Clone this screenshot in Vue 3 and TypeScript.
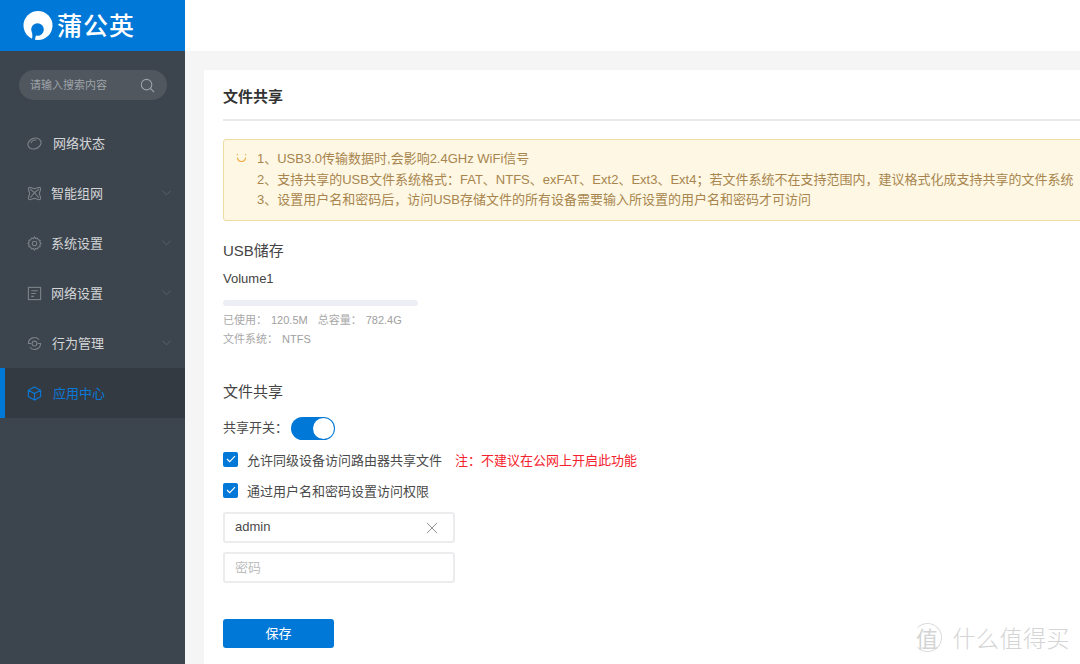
<template>
  <div class="page">
    <aside class="sidebar">
      <div class="logo">
        <svg class="logo-mark" viewBox="0 0 30 30" width="30" height="30">
          <circle cx="15" cy="14.5" r="14.5" fill="#fff" />
          <circle cx="14.5" cy="18.5" r="6.3" fill="#0078d7" />
          <path fill="#0078d7" d="M8.8 21c0.7 2.5 0.9 4.500-0.200 8.500l3 0.500 1.400-6z" />
        </svg>
        <span class="logo-text">蒲公英</span>
      </div>
      <div class="search">
        <span class="search-text">请输入搜索内容</span>
        <svg viewBox="0 0 16 16" width="15" height="15" fill="none" stroke="#9aa1a8" stroke-width="1.2">
          <circle cx="7" cy="7" r="5.6" />
          <path d="M11.2 11.2 15 15" />
        </svg>
      </div>
      <nav class="menu">
        <div v-for="item in menu" :key="item.label" class="menu-item" :class="{ active: item.active }">
          <svg class="menu-icon" viewBox="0 0 16 16" width="15" height="15" fill="none" stroke="currentColor" stroke-width="1.2" v-html="item.icon"></svg>
          <span class="menu-label" :style="{ marginLeft: item.gap + 'px' }">{{ item.label }}</span>
          <svg v-if="item.arrow" class="chevron" viewBox="0 0 10 6" width="9" height="6" fill="none" stroke="#5d656d" stroke-width="1">
            <path d="M0.5 0.5 5 5l4.5-4.5" />
          </svg>
        </div>
      </nav>
    </aside>

    <main class="main">
      <div class="topbar"></div>
      <section class="card">
        <h2 class="card-title">文件共享</h2>
        <div class="alert">
          <svg class="smile" viewBox="0 0 12 10" width="11" height="10" fill="none" stroke="#efb04c" stroke-width="1.3">
            <path d="M1.5 4.5c0.5 2.8 2.3 4.3 4.5 4.3s4-1.500 4.5-4.300" />
            <path d="M1.5 0.5v1.6M10.500 0.5v1.6" />
          </svg>
          <div class="alert-lines">
            <p>1、USB3.0传输数据时,会影响2.4GHz WiFi信号</p>
            <p>2、支持共享的USB文件系统格式：FAT、NTFS、exFAT、Ext2、Ext3、Ext4；若文件系统不在支持范围内，建议格式化成支持共享的文件系统</p>
            <p>3、设置用户名和密码后，访问USB存储文件的所有设备需要输入所设置的用户名和密码才可访问</p>
          </div>
        </div>

        <h3 class="section-title usb-title">USB储存</h3>
        <div class="volume">Volume1</div>
        <div class="bar"><div class="bar-fill" :style="{ width: usedPercent + '%' }"></div></div>
        <div class="meta">
          <div><span>已使用：</span><span class="m-val">120.5M</span><span class="m-gap">总容量：</span><span class="m-val">782.4G</span></div>
          <div><span>文件系统：</span><span class="m-val">NTFS</span></div>
        </div>

        <h3 class="section-title share-title">文件共享</h3>
        <div class="switch-row">
          <span>共享开关：</span>
          <span class="switch"><span class="knob"></span></span>
        </div>
        <label class="check-row first">
          <span class="check"><svg viewBox="0 0 12 10" width="10" height="8" fill="none" stroke="#fff" stroke-width="1.4"><path d="M1 5l3.4 3.4L11 1.4" /></svg></span>
          <span>允许同级设备访问路由器共享文件</span>
          <span class="warn">注：不建议在公网上开启此功能</span>
        </label>
        <label class="check-row second">
          <span class="check"><svg viewBox="0 0 12 10" width="10" height="8" fill="none" stroke="#fff" stroke-width="1.4"><path d="M1 5l3.4 3.4L11 1.4" /></svg></span>
          <span>通过用户名和密码设置访问权限</span>
        </label>
        <div class="field user">
          <span class="field-text">admin</span>
          <svg viewBox="0 0 12 12" width="12" height="12" fill="none" stroke="#8f8f8f" stroke-width="1"><path d="M1 1l10 10M11 1 1 11" /></svg>
        </div>
        <div class="field pass"><span class="field-text placeholder">密码</span></div>
        <button class="save" type="button">保存</button>
      </section>
    </main>

    <div class="watermark">
      <span class="wm-circle">值</span>
      <span class="wm-text">什么值得买</span>
    </div>
  </div>
</template>

<script setup lang="ts">
type MenuItem = {
  label: string
  icon: string
  gap: number
  arrow?: boolean
  active?: boolean
}

const usedPercent = 0.02

const menu: MenuItem[] = [
  {
    label: '网络状态',
    gap: 11,
    icon: '<ellipse cx="8" cy="8" rx="7.2" ry="5.6" transform="rotate(-22 8 8)"/><path d="M4.2 7.6C5 5.3 7.5 4 10 4.3"/>',
  },
  {
    label: '智能组网',
    gap: 9,
    arrow: true,
    icon: '<path d="M3 1.5c2 0 3 1.300 5 1.300s3-1.300 5-1.300c1 0 1.500.5 1.500 1.500 0 2-1.300 3-1.300 5s1.300 3 1.300 5c0 1-.5 1.500-1.500 1.500-2 0-3-1.300-5-1.300s-3 1.300-5 1.300c-1 0-1.500-.5-1.500-1.500 0-2 1.300-3 1.300-5S1.500 5 1.500 3c0-1 .5-1.500 1.500-1.500z"/><path d="M3.5 3.500C6 5 10 9 12.500 12.500M12.500 3.500C10 5 6 9 3.500 12.500"/>',
  },
  {
    label: '系统设置',
    gap: 9,
    arrow: true,
    icon: '<circle cx="8" cy="8" r="2.4"/><path d="M8 1l1.200 1.700 2-.5.800 1.900 2 .6-.3 2.100L15 8l-1.300 1.200.3 2.100-2 .6-.8 1.900-2-.5L8 15l-1.200-1.700-2 .5-.8-1.900-2-.6.3-2.100L1 8l1.300-1.200L2 4.700l2-.6.800-1.900 2 .5z"/>',
  },
  {
    label: '网络设置',
    gap: 9,
    arrow: true,
    icon: '<rect x="1.5" y="1.5" width="13" height="13"/><path d="M4.5 5h7M4.5 8h5M4.5 11h3"/>',
  },
  {
    label: '行为管理',
    gap: 10,
    arrow: true,
    icon: '<circle cx="8" cy="8" r="2.6"/><path d="M1.5 8a6.5 6.5 0 0 1 11.5-4M14.5 8A6.5 6.5 0 0 1 3 12M1 8h3.500M11.500 8H15"/>',
  },
  {
    label: '应用中心',
    gap: 11,
    active: true,
    icon: '<path d="M8 1l6.500 3.500v7L8 15l-6.500-3.500v-7zM1.500 4.500 8 8l6.500-3.500M8 8v7"/>',
  },
]
</script>

<style>
html,
body {
  margin: 0;
  height: 100%;
  overflow: hidden;
}
</style>

<style scoped>
.page {
  position: relative;
  display: flex;
  width: 1080px;
  height: 664px;
  overflow: hidden;
  font-family: "Liberation Sans", "Noto Sans CJK SC", sans-serif;
  font-size: 13px;
  color: #4a4a4a;
  background: #f5f5f5;
}

.sidebar {
  flex: none;
  width: 185px;
  background: #3c444d;
}

.logo {
  display: flex;
  align-items: center;
  height: 51px;
  padding-left: 23px;
  background: #0078d7;
  color: #fff;
}

.logo-text {
  margin: 0 0 3px 4px;
  font-size: 25px;
  font-weight: 500;
  letter-spacing: 1px;
}

.search {
  display: flex;
  align-items: center;
  justify-content: space-between;
  box-sizing: border-box;
  width: 148px;
  height: 30px;
  margin: 19px 0 0 19px;
  padding: 0 12px 0 11px;
  border-radius: 15px;
  background: #50575f;
}

.search-text {
  margin-bottom: 2px;
  font-size: 11px;
  color: #9ea3a8;
}

.menu {
  margin-top: 18px;
}

.menu-item {
  display: flex;
  align-items: center;
  height: 50px;
  padding-left: 27px;
  color: #7b8187;
}

.menu-label {
  margin-bottom: 2px;
  font-size: 13px;
  color: #d4d6d8;
}

.chevron {
  margin-left: auto;
  margin-right: 14px;
}

.menu-item.active {
  background: #343a41;
  color: #0a78d8;
  box-shadow: inset 5px 0 0 #0078d7;
}

.menu-item.active .menu-label {
  color: #0a78d8;
}

.main {
  flex: 1;
  min-width: 0;
}

.topbar {
  height: 51px;
  background: #fff;
}

.card {
  box-sizing: border-box;
  width: 900px;
  height: 620px;
  margin: 19px 0 0 19px;
  padding: 0 0 0 19px;
  background: #fff;
}

.card-title {
  height: 49px;
  margin: 0;
  border-bottom: 2px solid #e9e9ec;
  font-size: 15px;
  font-weight: 700;
  line-height: 54px;
  color: #333;
}

.alert {
  display: flex;
  box-sizing: border-box;
  width: 900px;
  height: 82px;
  margin-top: 18px;
  padding: 9px 0 0 12px;
  border: 1px solid #f0dca0;
  border-radius: 3px;
  background: #fdf7e3;
  color: #a8854e;
}

.smile {
  flex: none;
  margin-top: 4px;
}

.alert-lines {
  margin-left: 10px;
  white-space: nowrap;
  line-height: 20.5px;
}

.alert-lines p {
  margin: 0;
}

.section-title {
  margin: 0;
  font-size: 15px;
  font-weight: 400;
  color: #444;
}

.usb-title {
  margin-top: 19px;
  line-height: 22px;
}

.volume {
  margin-top: 8px;
  line-height: 18px;
  color: #444;
}

.bar {
  width: 195px;
  height: 6px;
  margin-top: 12px;
  border-radius: 3px;
  background: #edeef5;
  overflow: hidden;
}

.bar-fill {
  height: 100%;
  background: #0078d7;
}

.meta {
  margin-top: 5px;
  font-size: 11px;
  line-height: 19px;
  color: #a8a8a8;
}

.m-val {
  margin-left: 4px;
  color: #a0a0a0;
}

.m-gap {
  margin-left: 10px;
}

.share-title {
  margin-top: 32px;
  line-height: 22px;
}

.switch-row {
  display: flex;
  align-items: center;
  margin-top: 11px;
  height: 24px;
  color: #4a4a4a;
}

.switch {
  position: relative;
  display: block;
  width: 44px;
  height: 23px;
  margin: 4px 0 0 3px;
  border-radius: 12px;
  background: #0078d7;
}

.knob {
  position: absolute;
  top: 1px;
  right: 1px;
  width: 21px;
  height: 21px;
  border-radius: 50%;
  background: #fff;
}

.check-row {
  display: flex;
  align-items: center;
  height: 20px;
  color: #4a4a4a;
}

.check-row.first {
  margin-top: 11px;
}

.check-row.second {
  margin-top: 11px;
}

.check {
  display: flex;
  align-items: center;
  justify-content: center;
  width: 15px;
  height: 15px;
  margin-right: 9px;
  border-radius: 2px;
  background: #0078d7;
}

.warn {
  margin-left: 13px;
  color: #f5222d;
}

.field {
  display: flex;
  align-items: center;
  justify-content: space-between;
  box-sizing: border-box;
  width: 232px;
  height: 31px;
  padding: 0 15px 0 10px;
  border: 2px solid #ececef;
  border-radius: 3px;
  color: #4a4a4a;
}

.field-text {
  margin-bottom: 2px;
}

.field.user {
  margin-top: 12px;
}

.field.pass {
  margin-top: 9px;
}

.placeholder {
  color: #bdbdbd;
}

.save {
  display: block;
  width: 111px;
  height: 29px;
  margin-top: 36px;
  padding: 0 0 3px;
  border: none;
  border-radius: 3px;
  background: #0078d7;
  font: inherit;
  color: #fff;
}

.watermark {
  position: absolute;
  right: 10px;
  bottom: 10px;
  display: flex;
  align-items: center;
  color: #d4d4d4;
}

.wm-circle {
  display: flex;
  align-items: center;
  justify-content: center;
  box-sizing: border-box;
  width: 29px;
  height: 29px;
  border: 1px solid #dcdcdc;
  border-left-color: transparent;
  border-radius: 50%;
  font-size: 22px;
}

.wm-text {
  margin-left: 11px;
  font-size: 23px;
  font-weight: 300;
  letter-spacing: 0.5px;
}
</style>
